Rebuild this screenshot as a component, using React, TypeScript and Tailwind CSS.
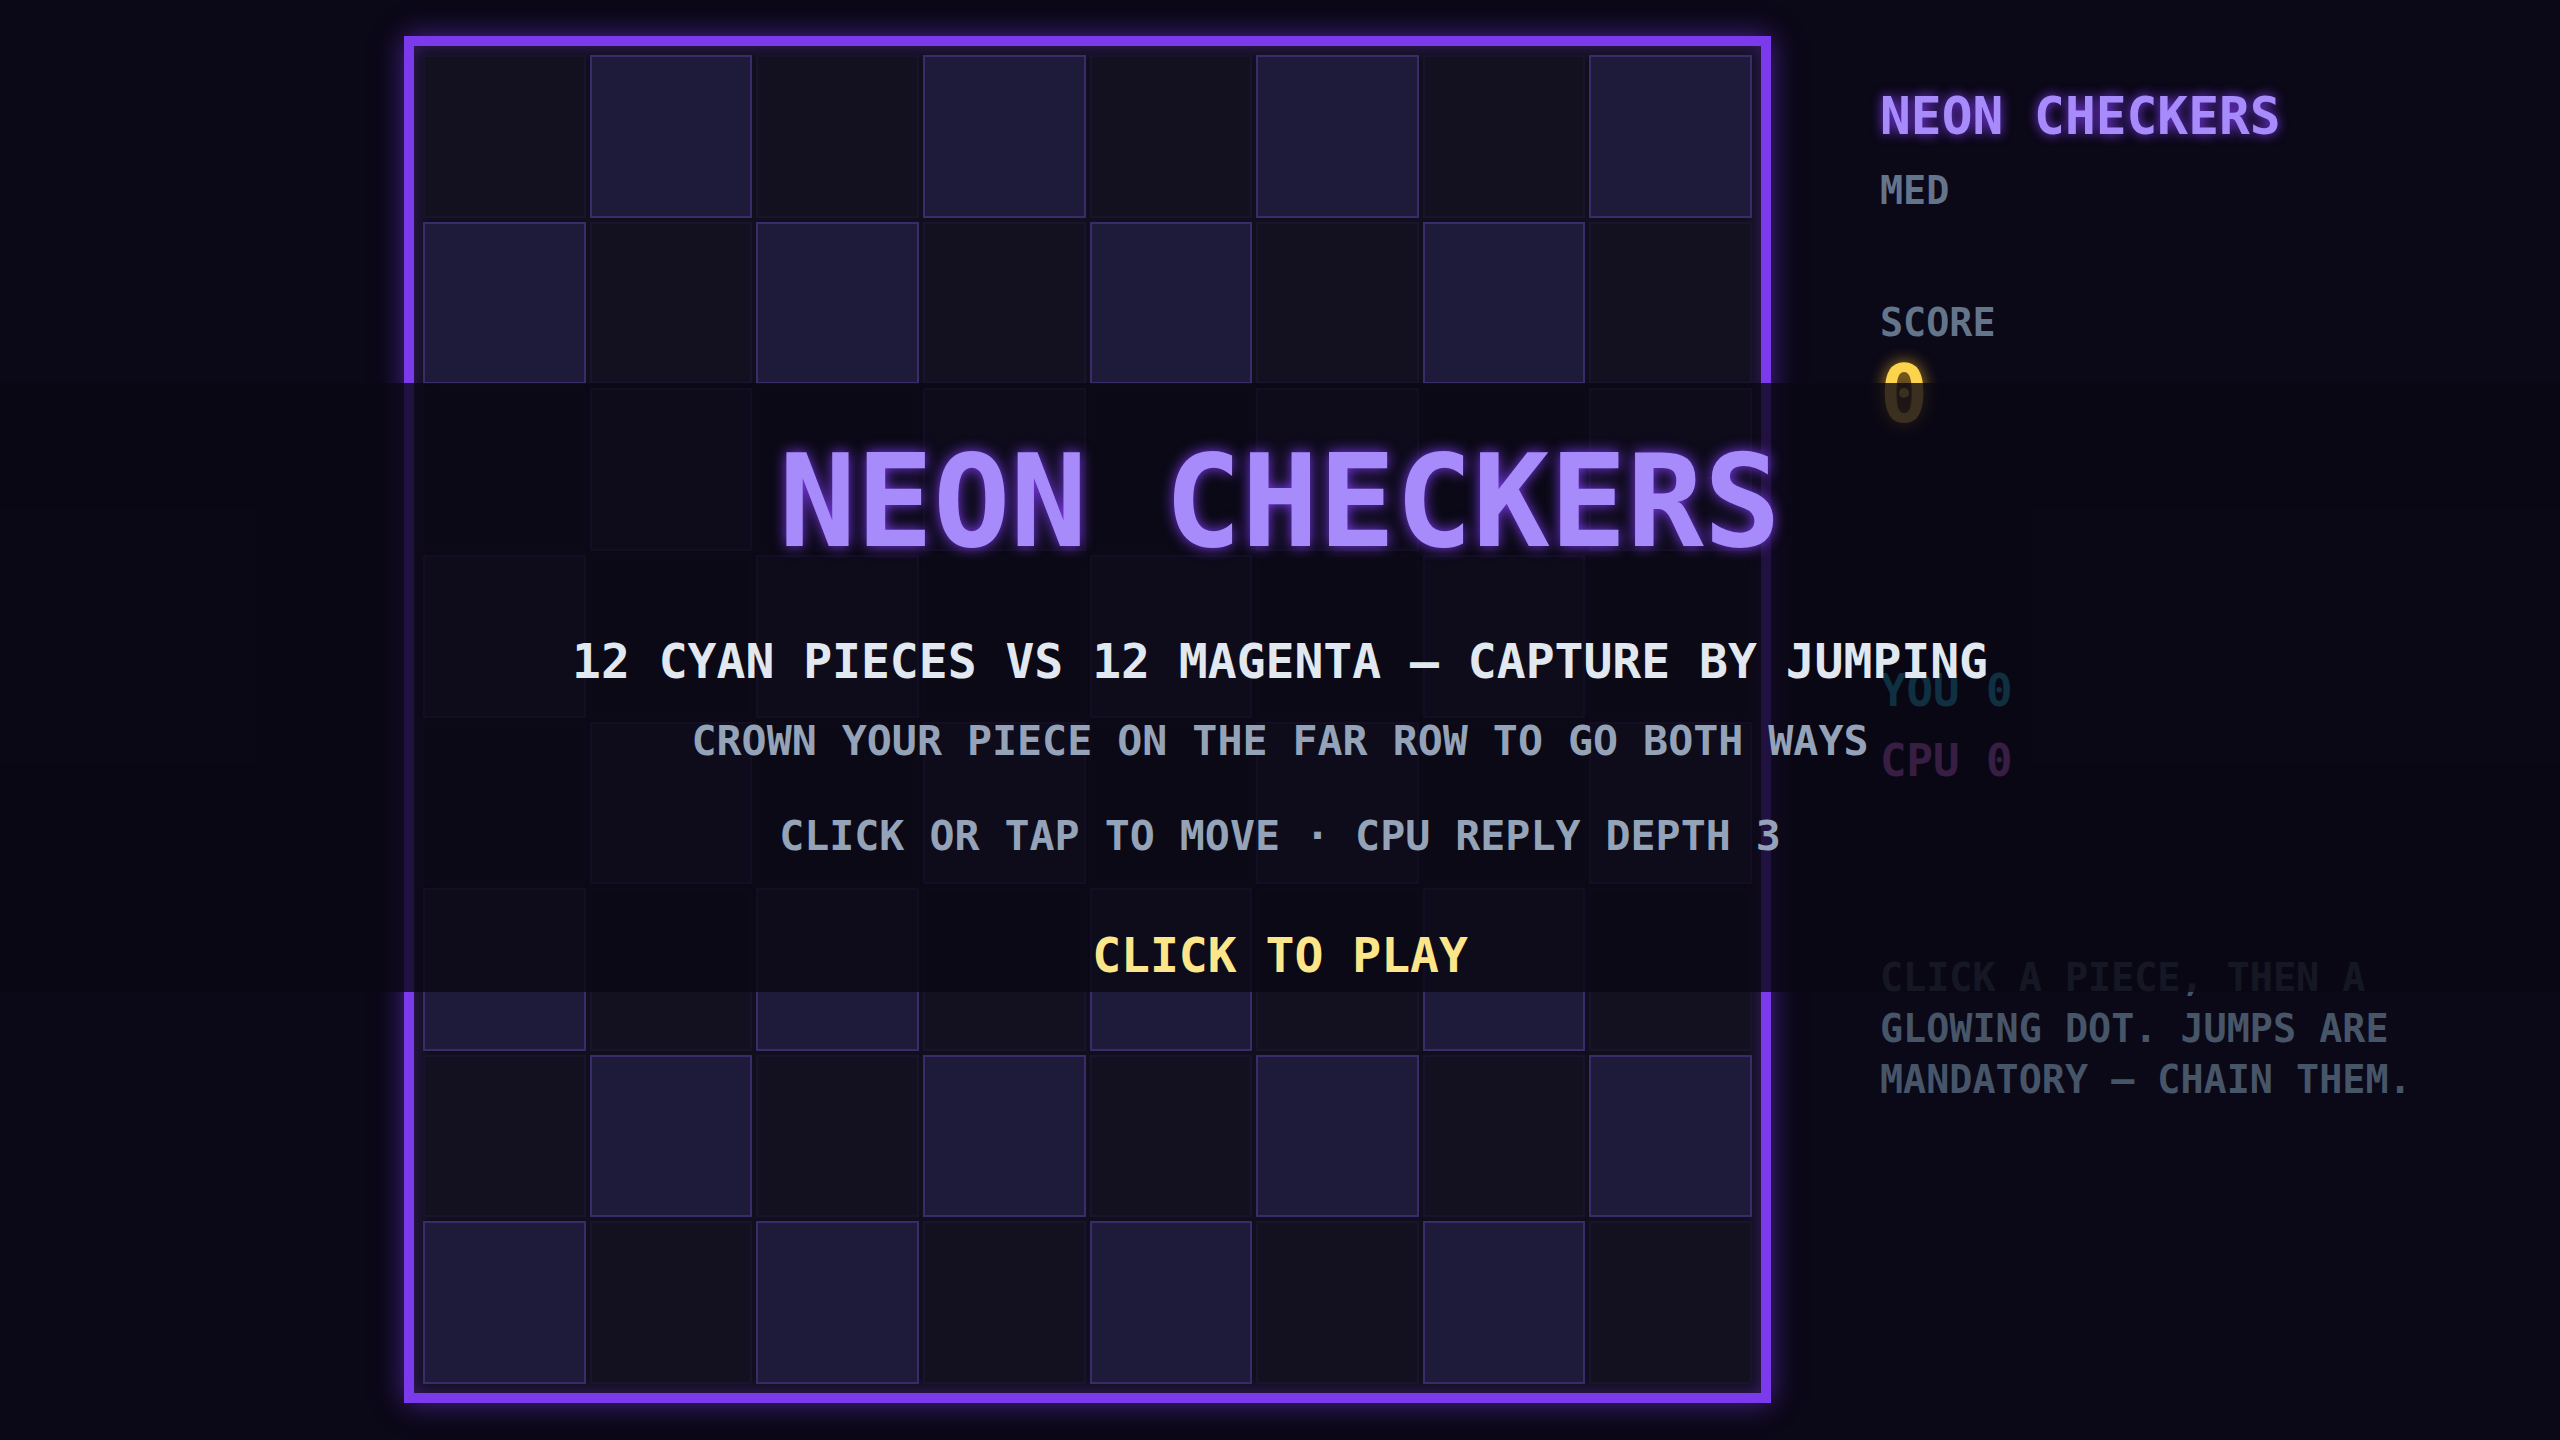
import React from "react";

const cells = Array.from({ length: 64 }, (_, i) => {
  const r = Math.floor(i / 8);
  const c = i % 8;
  return { key: i, light: (r + c) % 2 === 1 };
});

export default function App() {
  return (
    <div className="relative h-[1440px] w-[2560px] overflow-hidden bg-[#0b0817] font-bold [font-family:'DejaVu_Sans_Mono','Liberation_Mono',monospace]">
      <div className="flex items-start gap-[109px] pl-[404px]">
        {/* Board */}
        <div className="mt-[36px] h-[1367px] w-[1367px] shrink-0 border-[10px] border-[#7c3aed] bg-[#110f1d] p-[9px] shadow-[0_0_26px_rgba(124,58,237,0.55),inset_0_0_18px_rgba(124,58,237,0.35)]">
          <div className="grid h-full w-full grid-cols-8 grid-rows-8 gap-[4px]">
            {cells.map((cell) =>
              cell.light ? (
                <div
                  key={cell.key}
                  className="border-2 border-[#392c69] bg-[#1e1a3a]"
                />
              ) : (
                <div
                  key={cell.key}
                  className="border-2 border-[#17142b] bg-[#13111f]"
                />
              )
            )}
          </div>
        </div>

        {/* Side panel */}
        <div className="flex w-[640px] flex-col pt-[91px]">
          <div className="text-[51.2px] leading-none text-[#a78bfa] [text-shadow:0_0_12px_#7c3aed]">
            NEON CHECKERS
          </div>
          <div className="mt-[30px] text-[38.4px] leading-none text-[#64748b]">
            MED
          </div>
          <div className="mt-[93px] text-[38.4px] leading-none text-[#64748b]">
            SCORE
          </div>
          <div className="mt-[13px] text-[80px] leading-none text-[#fcd34d] [text-shadow:0_0_16px_rgba(251,191,36,0.75)]">
            0
          </div>
          <div className="mt-[234px] text-[44px] leading-none text-[#22d3ee]">
            YOU 0
          </div>
          <div className="mt-[26px] text-[44px] leading-none text-[#e879f9]">
            CPU 0
          </div>
          <div className="mt-[169px] w-[600px] text-[38.4px] leading-[51px] text-[#475569]">
            CLICK A PIECE, THEN A GLOWING DOT. JUMPS ARE MANDATORY — CHAIN
            THEM.
          </div>
        </div>
      </div>

      {/* Start overlay band */}
      <div className="absolute inset-x-0 top-[383px] flex h-[609px] flex-col items-center bg-[rgba(10,8,20,0.8)] pt-[55px] text-center">
        <div className="text-[128px] leading-none text-[#a78bfa] [text-shadow:0_0_14px_#7c3aed]">
          NEON CHECKERS
        </div>
        <div className="mt-[71px] text-[48px] leading-none text-[#e2e8f0]">
          12 CYAN PIECES VS 12 MAGENTA — CAPTURE BY JUMPING
        </div>
        <div className="mt-[35px] text-[41.6px] leading-none text-[#94a3b8]">
          CROWN YOUR PIECE ON THE FAR ROW TO GO BOTH WAYS
        </div>
        <div className="mt-[53px] text-[41.6px] leading-none text-[#94a3b8]">
          CLICK OR TAP TO MOVE · CPU REPLY DEPTH 3
        </div>
        <div className="mt-[75px] text-[48px] leading-none text-[#fde68a]">
          CLICK TO PLAY
        </div>
      </div>
    </div>
  );
}
